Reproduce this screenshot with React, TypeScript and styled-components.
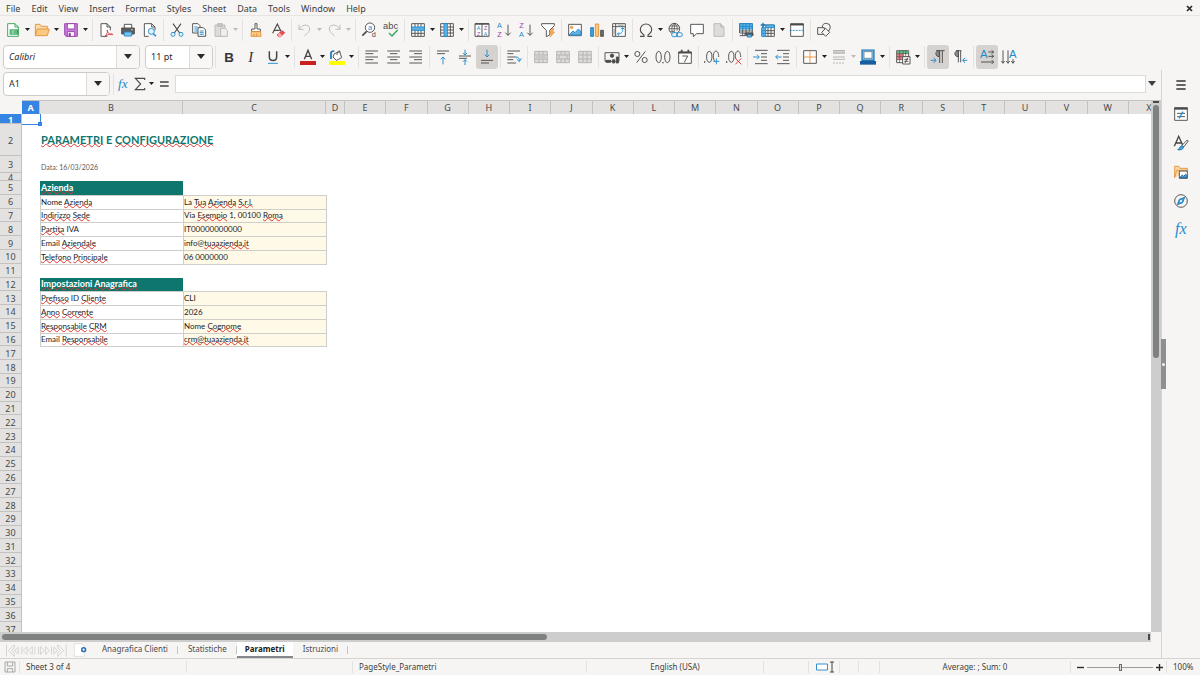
import React from 'react';
import styled, { createGlobalStyle, css } from 'styled-components';

const GlobalStyle = createGlobalStyle`
  * { box-sizing: border-box; }
  html, body, #root { height: 100%; }
  body {
    margin: 0;
    overflow: hidden;
    background: #f6f5f4;
    color: #3c3e40;
    font-family: "Noto Sans", sans-serif;
    font-size: 9px;
    line-height: 12px;
  }
  button, input {
    margin: 0;
    padding: 0;
    border: 0;
    background: none;
    color: inherit;
    font: inherit;
  }
  svg {
    flex: none;
    overflow: visible;
  }
`;

/* ---------- frame ---------- */

const Window = styled.div`
  display: flex;
  flex-direction: column;
  height: 100vh;
  min-height: 320px;
`;

const MenuBar = styled.nav`
  display: flex;
  align-items: center;
  gap: 11px;
  height: 16px;
  padding: 0 5px 0 6px;
  border-bottom: 1px solid #e6e5e3;
`;

const MenuItem = styled.button`
  padding-top: 2px;
  white-space: nowrap;
`;

const CloseButton = styled.button`
  display: flex;
  margin-left: auto;
  padding: 2px 2px 0;
`;

const Toolbar = styled.div`
  display: flex;
  align-items: center;
  height: 27px;
  padding-left: 2px;
`;

const Separator = styled.span<{ $wide?: boolean }>`
  flex: none;
  width: 1px;
  height: 22px;
  margin: 0 2px 0 ${p => (p.$wide ? 3 : 2)}px;
  background: #e3e2e0;
`;

const ToolButton = styled.button<{ $active?: boolean }>`
  display: flex;
  flex: none;
  align-items: center;
  justify-content: center;
  width: 22px;
  height: 24px;
  border-radius: 3px;
  background: ${p => (p.$active ? '#d5d2cf' : 'transparent')};
`;

const ArrowButton = styled.button<{ $dim?: boolean }>`
  display: flex;
  flex: none;
  align-items: center;
  justify-content: center;
  width: 7px;
  height: 24px;
  color: ${p => (p.$dim ? '#bdbcba' : '#202020')};
`;

const Combo = styled.div<{ $width: number }>`
  display: flex;
  flex: none;
  width: ${p => p.$width}px;
  height: 24px;
  border: 1px solid #cfccc8;
  border-radius: 4px;
  background: #fff;
  overflow: hidden;
`;

const ComboInput = styled.input<{ $italic?: boolean }>`
  flex: 1;
  min-width: 0;
  padding-left: 5px;
  color: #2c2c2c;
  font-style: ${p => (p.$italic ? 'italic' : 'normal')};
`;

const ComboButton = styled.button`
  display: flex;
  align-items: center;
  justify-content: center;
  width: 23px;
  border-left: 1px solid #dddbd8;
  background: #f8f7f6;
  color: #2b2b2b;
`;

const FormatBar = styled(Toolbar)`
  padding-left: 3px;
`;

const ComboGap = styled.span`
  width: 5px;
`;

/* ---------- body ---------- */

const Body = styled.div`
  display: flex;
  flex: 1;
  min-height: 0;
`;

const Main = styled.main`
  display: flex;
  flex: 1;
  flex-direction: column;
  min-width: 0;
`;

const FormulaBar = styled.div`
  display: flex;
  align-items: center;
  height: 27px;
  padding: 0 3px;
`;

const FormulaButton = styled.button<{ $width: number }>`
  display: flex;
  flex: none;
  align-items: center;
  justify-content: center;
  width: ${p => p.$width}px;
  height: 22px;
`;

const FormulaInput = styled.input`
  flex: 1;
  min-width: 0;
  height: 18px;
  margin-left: 2px;
  padding: 0 4px;
  border: 1px solid #dddbd8;
  background: #fff;
`;

const SheetArea = styled.div`
  display: flex;
  flex: 1;
  min-height: 0;
  margin-top: 3px;
`;

const SheetView = styled.div`
  flex: 1;
  min-width: 0;
  overflow: hidden;
  background: #fff;
`;

const Grid = styled.table`
  display: grid;
  grid-template-columns: 22px 18px 143px 143px 19px repeat(20, minmax(0, 1fr));
  grid-template-rows: 14px 10px 32px 17px 8px repeat(33, minmax(0, 1fr));
  width: calc(100% + 19px);
  height: calc(100% + 4px);
`;

const Section = styled.thead`
  display: contents;
`;

const Row = styled.tr`
  display: contents;
`;

const headerCell = css<{ $selected?: boolean }>`
  display: flex;
  align-items: center;
  justify-content: center;
  padding: 0;
  overflow: hidden;
  border: 0 solid #c3c2c0;
  background: ${p => (p.$selected ? '#3584e4' : '#e3e2e1')};
  color: ${p => (p.$selected ? '#fff' : '#47494b')};
  font-weight: ${p => (p.$selected ? 700 : 400)};
`;

const Corner = styled.td`
  padding: 0;
  background: #f6f5f4;
`;

const ColumnHead = styled.th<{ $selected?: boolean }>`
  ${headerCell}
  border-width: 1px 1px 0 0;
`;

const RowHead = styled.th<{ $selected?: boolean }>`
  ${headerCell}
  padding-top: 2px;
  border-width: 0 1px 1px 0;
`;

type Kind = 'empty' | 'title' | 'date' | 'band' | 'label' | 'value';

const Cell = styled.td<{ $kind: Kind; $last?: boolean }>`
  position: relative;
  display: flex;
  align-items: flex-end;
  padding: 0 0 1px;
  color: #1c1c1c;
  font-family: Lato, "Liberation Sans", sans-serif;
  font-size: 8px;
  line-height: 11px;
  white-space: pre;
  ${p => (p.$kind === 'label' || p.$kind === 'value') && css`
    border: 0 solid #cfcec8;
    border-width: 1px 0 0 1px;
  `}
  ${p => p.$kind === 'value' && css`
    margin-right: -1px;
    border-right-width: 1px;
    background: #fff9e8;
  `}
  ${p => p.$last && css`
    margin-bottom: -1px;
    border-bottom-width: 1px;
  `}
  ${p => p.$kind === 'band' && css`
    padding: 0 0 2px 1px;
    background: #0f766e;
    color: #fff;
    font-size: 9px;
    font-weight: 700;
  `}
  ${p => p.$kind === 'title' && css`
    align-items: center;
    padding: 0 0 2px 1px;
    color: #0f766e;
    font-size: 11px;
    font-weight: 700;
  `}
  ${p => p.$kind === 'date' && css`
    padding: 0 0 0 1px;
    color: #5c5c5c;
    font-size: 7px;
  `}
`;

const Misspelt = styled.span`
  text-decoration: underline wavy #e0352b 1px;
  text-decoration-skip-ink: none;
  text-underline-offset: -1px;
`;

const CellCursor = styled.span`
  position: absolute;
  inset: 0 -1px -1px 0;
  border: 0 solid #3584e4;
  border-width: 0 1px 1px 0;
  &::after {
    content: '';
    position: absolute;
    right: -2px;
    bottom: -2px;
    width: 4px;
    height: 4px;
    background: #3584e4;
  }
`;

const VScroll = styled.div`
  position: relative;
  width: 10px;
  padding: 4px 2px 0;
  border-top: 1px solid #c3c2c0;
  background: #cdcdcd;
`;

const VThumb = styled.div`
  height: 48%;
  border-radius: 3px;
  background: #7f8180;
`;

const HScroll = styled.div`
  display: flex;
  justify-content: space-between;
  height: 10px;
  margin-right: 10px;
  padding: 2px 1px 2px 2px;
  background: #cdcdcd;
`;

const HThumb = styled.div`
  width: 47.5%;
  border-radius: 3px;
  background: #7f8180;
`;

const SplitHandle = styled.span`
  width: 2px;
  background: #4a4a4a;
`;

const VSplitHandle = styled.span`
  position: absolute;
  top: 0;
  left: 2px;
  width: 6px;
  height: 2px;
  background: #4a4a4a;
`;

/* ---------- sheet tabs ---------- */

const TabBar = styled.div`
  display: flex;
  height: 16px;
  font-size: 8px;
`;

const TabNav = styled.div`
  display: flex;
  align-items: center;
  width: 73px;
  padding-left: 5px;
  color: #cfcecc;
`;

const TabNavButton = styled.button`
  display: flex;
  width: 16px;
`;

const AddSheet = styled.button`
  display: flex;
  align-items: center;
  width: 19px;
`;

const Tab = styled.button<{ $active?: boolean; $rule?: boolean }>`
  position: relative;
  padding: 0 ${p => (p.$active ? 8 : 10)}px;
  border-bottom: 2px solid ${p => (p.$active ? '#85888a' : 'transparent')};
  background: ${p => (p.$active ? '#fff' : 'transparent')};
  color: ${p => (p.$active ? '#222' : '#4a4c4e')};
  font-weight: ${p => (p.$active ? 700 : 400)};
  white-space: nowrap;
  ${p => p.$rule && css`
    &::after {
      content: '';
      position: absolute;
      top: 4px;
      right: 0;
      width: 1px;
      height: 8px;
      background: #c6c5c3;
    }
  `}
`;

/* ---------- sidebar ---------- */

const Sash = styled.div`
  display: flex;
  align-items: center;
  width: 4px;
  border-left: 1px solid #d6d4d1;
`;

const SashHandle = styled.button`
  position: relative;
  flex: none;
  width: 5px;
  height: 50px;
  margin-left: -1px;
  background: #8e8f8e;
  &::after {
    content: '';
    position: absolute;
    top: 24px;
    left: 1px;
    width: 3px;
    height: 3px;
    border-radius: 2px;
    background: #f6f5f4;
  }
`;

const SideBar = styled.aside`
  display: flex;
  flex-direction: column;
  width: 35px;
`;

const SideButton = styled.button`
  display: flex;
  align-items: center;
  justify-content: center;
  width: 32px;
  height: 29px;
`;

/* ---------- status bar ---------- */

const StatusBar = styled.footer`
  display: grid;
  grid-template-columns: 20px 167fr 166fr 234fr 177fr 45px 31px 19px 21px 191fr 96px 33px;
  align-items: center;
  height: 17px;
  border-top: 1px solid #d6d4d1;
  font-size: 8px;
`;

const Status = styled.div<{ $center?: boolean }>`
  display: flex;
  align-items: center;
  justify-content: ${p => (p.$center ? 'center' : 'flex-start')};
  height: 12px;
  padding: 0 ${p => (p.$center ? 0 : 6)}px;
  border-right: 1px solid #e3e2e0;
  white-space: nowrap;
  &:last-child { border-right: 0; }
`;

const ZoomStatus = styled(Status)`
  padding: 0 3px 0 6px;
`;

const ZoomButton = styled.button`
  display: flex;
  flex: none;
`;

const ZoomSlider = styled.input`
  flex: 1;
  min-width: 0;
  height: 12px;
  margin: 0 3px;
  appearance: none;
  &::-webkit-slider-runnable-track {
    height: 1px;
    background: #9a9c9b;
  }
  &::-webkit-slider-thumb {
    appearance: none;
    width: 3px;
    height: 7px;
    margin-top: -3px;
    border: 1px solid #6b6d6c;
    background: #dcdcdc;
  }
`;

/* ---------- icons (24 unit box) ---------- */

const INK = '#4b4b4b';
const BLUE = '#1e8bcd';
const PURPLE = '#9a3fae';
const DIM = '#b9b8b6';

const Glyph = styled.text`
  stroke: none;
  font-family: "Liberation Sans", sans-serif;
`;

const SerifGlyph = styled.text`
  stroke: none;
  font-family: "Liberation Serif", serif;
  font-style: italic;
`;

const Svg = ({ children, color = INK }: { children: React.ReactNode; color?: string }) => (
  <svg width="16" height="16" viewBox="0 0 24 24" fill="none" stroke={color} strokeWidth="1.4" aria-hidden="true">
    {children}
  </svg>
);

const Caret = ({ size = 5 }: { size?: number }) => (
  <svg width={size} height={size === 5 ? 3 : 5} viewBox="0 0 10 6" aria-hidden="true">
    <path d="M0 0h10L5 6z" fill="currentColor" />
  </svg>
);

const alignLines = (rows: number[][], color = INK) => (
  <path stroke={color} d={rows.map(([x, y, w]) => `M${x} ${y}h${w}`).join('')} />
);

const mergeIcon = (inner: string) => (
  <Svg color="#b3b2b0">
    <path fill="#dddcda" d="M2.500 3.500h19v17h-19z" />
    <path d={inner} />
  </Svg>
);

const icons: Record<string, React.ReactNode> = {
  New: (
    <Svg color="#2fa457">
      <path fill="#fff" d="M4 2.500h11l5 5v14H4z" />
      <path d="M15 2.500v5h5" />
      <path fill="#2fa457" stroke="none" d="M7 11h13v8H7z" />
      <path stroke="#d5f0dd" strokeWidth="1" d="M8 13.500h10M8 16.500h10M12 12v6" />
    </Svg>
  ),
  Open: (
    <Svg color="#e3933c">
      <path fill="#fbd9a6" d="M2 20V3.500h7l2 3h9v4" />
      <path fill="#fbc982" d="M2 20.500l3-10h18l-3 10z" />
    </Svg>
  ),
  Save: (
    <Svg color={PURPLE}>
      <path fill="#c57fd6" d="M2.500 2.500h19v19H4.500l-2-2z" />
      <path fill="#fff" d="M6.500 2.500h11v8h-11zM6.500 14.500h11v7h-11z" />
      <path fill={PURPLE} d="M9 17h2v4H9z" />
    </Svg>
  ),
  'Export as PDF': (
    <Svg>
      <path fill="#fff" d="M14 21.500H4.500v-19h9l5 5v5" />
      <path d="M13.500 2.500v5h5" />
      <path stroke="#d6404b" d="M10 22c4-4 5-8 4-10-2 0 2 8 8 7 1-2-5-2-12 3z" />
    </Svg>
  ),
  Print: (
    <Svg>
      <path fill="#fff" d="M6.500 9V3.500h11V9" />
      <path fill="#5b5e60" d="M2.500 9h19v9h-19z" />
      <path stroke="#fff" d="M17 11.500h2" />
      <path fill="#7fc0ea" stroke={BLUE} d="M6.500 15h11v6h-11z" />
    </Svg>
  ),
  'Print preview': (
    <Svg>
      <path fill="#fff" d="M10 21.500H3.500v-19h11l5 5v5" />
      <path d="M14.500 2.500v5h5" />
      <circle cx="14" cy="14" r="4.500" fill="#e2f1fb" stroke={BLUE} />
      <path stroke={BLUE} strokeWidth="2" d="M17 17.500l4 4" />
    </Svg>
  ),
  Cut: (
    <Svg>
      <path strokeWidth="1.700" d="M6 2.500l10 14M18 2.500L8 16.500" />
      <circle cx="6" cy="18.500" r="3" stroke={BLUE} />
      <circle cx="18" cy="18.500" r="3" stroke={BLUE} />
    </Svg>
  ),
  Copy: (
    <Svg>
      <path fill="#fff" d="M2.500 2.500h8l3 3v11h-11z" />
      <path stroke={BLUE} d="M5 7.500h5M5 10.500h5M5 13.500h5" />
      <path fill="#fff" d="M10.500 8.500h8l3.500 3.500v9.500H10.500z" />
      <path stroke={BLUE} d="M13 13.500h6M13 16h6M13 18.500h6" />
    </Svg>
  ),
  Paste: (
    <Svg color={DIM}>
      <path fill="#dddcda" d="M3 4.500h15v17H3z" />
      <path fill="#c9c8c6" d="M7 2.500h7v4H7z" />
      <path fill="#f0efee" d="M11.500 9.500h7l3 3v9h-10z" />
    </Svg>
  ),
  'Clone formatting': (
    <Svg>
      <path fill="#fff" d="M10.500 2.500h3v8h5v4h-13v-4h5z" />
      <path fill="#fbc982" stroke="#e3933c" d="M5 14.500h14l.500 7H4.500z" />
      <path stroke="#e3933c" d="M9 18v3M13 17v4" />
    </Svg>
  ),
  'Clear formatting': (
    <Svg>
      <path strokeWidth="1.800" d="M4 17L11 3l5.500 11M6.500 12.500h8" />
      <path fill="#ef4a50" stroke="#d6404b" d="M11 19l7-6 4 3-6 6h-3z" />
      <path fill="#f7b3b3" stroke="none" d="M12 18l2-2 4 4-2 2h-3z" />
    </Svg>
  ),
  Undo: (
    <Svg color={DIM}>
      <path d="M3 4v7h7M3 11c4-7 12-8 15-4 3 5-1 9-7 14" />
    </Svg>
  ),
  Redo: (
    <Svg color={DIM}>
      <path d="M21 4v7h-7M21 11C17 4 9 3 6 7c-3 5 1 9 7 14" />
    </Svg>
  ),
  'Find and replace': (
    <Svg>
      <circle cx="13.500" cy="8.500" r="7" fill="#fff" />
      <path strokeWidth="2.400" d="M8.500 14L2 20.500" />
      <Glyph x="10.500" y="12" fontSize="11" fill={BLUE}>a</Glyph>
      <Glyph x="16" y="23" fontSize="11" fill={INK}>d</Glyph>
    </Svg>
  ),
  Spelling: (
    <Svg>
      <Glyph x="0" y="11" fontSize="14" fill={INK}>abc</Glyph>
      <path stroke="#2fa457" strokeWidth="2" d="M9 16.500l4.500 4.500L22 12" />
    </Svg>
  ),
  Row: (
    <Svg>
      <path fill="#fff" d="M2.500 2.500h19v19h-19zM7.500 2.500v19M12 2.500v19M16.500 2.500v19M2.500 17h19" />
      <path fill="#62b2e4" stroke={BLUE} d="M2.500 7.500h19v5h-19z" />
    </Svg>
  ),
  Column: (
    <Svg>
      <path fill="#fff" d="M2.500 2.500h19v19h-19zM2.500 7.500h19M2.500 12h19M2.500 16.500h19M17 2.500v19" />
      <path fill="#62b2e4" stroke={BLUE} d="M7.500 2.500h5v19h-5z" />
    </Svg>
  ),
  Sort: (
    <Svg>
      <path fill="#fff" d="M1.500 2.500h21v19h-21zM12 2.500v19" />
      <path strokeWidth="2" d="M1.500 3h21" />
      <Glyph x="4" y="11.500" fontSize="8" fill={BLUE}>A</Glyph>
      <Glyph x="4.500" y="20.500" fontSize="8" fill={PURPLE}>Z</Glyph>
      <Glyph x="15" y="11.500" fontSize="8" fill={PURPLE}>Z</Glyph>
      <Glyph x="14.500" y="20.500" fontSize="8" fill={BLUE}>A</Glyph>
    </Svg>
  ),
  'Sort ascending': (
    <Svg>
      <Glyph x="1.500" y="9.500" fontSize="11" fill={BLUE}>A</Glyph>
      <Glyph x="2" y="22.500" fontSize="11" fill={PURPLE}>Z</Glyph>
      <path d="M18 4v16M14 16l4 4 4-4" />
    </Svg>
  ),
  'Sort descending': (
    <Svg>
      <Glyph x="2" y="9.500" fontSize="11" fill={PURPLE}>Z</Glyph>
      <Glyph x="1.500" y="22.500" fontSize="11" fill={BLUE}>A</Glyph>
      <path d="M18 4v16M14 16l4 4 4-4" />
    </Svg>
  ),
  AutoFilter: (
    <Svg>
      <path fill="#fff" d="M2.500 2.500h19v3l-7 7v7l-5 2.500v-9.500l-7-7z" />
      <path fill="#f4a64b" stroke="#e3933c" strokeWidth=".8" d="M18 10l-4 7h3l-2 6 7-8h-3l2-5z" />
    </Svg>
  ),
  'Insert image': (
    <Svg>
      <path fill="#fff" d="M2.500 3.500h19v17h-19z" />
      <circle cx="7" cy="8" r="1.800" fill="#f4a64b" stroke="#e3933c" />
      <path fill="#62b2e4" stroke={BLUE} d="M3 19.500l6-6 3 2.500 5-5.500 4 4v5z" />
    </Svg>
  ),
  'Insert chart': (
    <Svg>
      <path fill="#4aa3dc" stroke="#1b76b5" d="M2.500 8.500h4v13h-4z" />
      <path fill="#fbc982" stroke="#e3933c" d="M9.500 3h5v18.500h-5z" />
      <path fill="#6d6f70" d="M17.500 12.500h4v9h-4z" />
    </Svg>
  ),
  'Insert pivot table': (
    <Svg>
      <path fill="#fff" d="M2.500 2.500h19v19h-19zM7 2.500v19M2.500 7h19" />
      <path stroke={BLUE} d="M17 9c2 5-1 9-7 9M15 11l2-2.500 3 2M12 15.500L9.500 18l2.500 2" />
      <path strokeWidth=".9" d="M10 4.800h9M4.800 10v9" />
    </Svg>
  ),
  'Special character': (
    <Svg>
      <path strokeWidth="1.700" d="M3 21.500h6v-2C5 17 3.500 14 3.500 11a8.500 8 0 0117 0c0 3-1.500 6-5.500 8.500v2h6" />
    </Svg>
  ),
  Hyperlink: (
    <Svg>
      <circle cx="11" cy="10" r="8" />
      <path strokeWidth="1.100" d="M3 10h16M4.500 6h13M4.500 14h6M11 2v16M11 2C6 6 6 14 11 18M11 2c4 3 5 7 4 11" />
      <rect x="7" y="16" width="9" height="6" rx="3" stroke={BLUE} fill="#f6f5f4" />
      <rect x="14" y="16" width="9" height="6" rx="3" stroke={BLUE} />
    </Svg>
  ),
  Comment: (
    <Svg>
      <path fill="#fff" d="M2.500 3.500h19v14h-10l-5 4.500v-4.500h-4z" />
    </Svg>
  ),
  'Headers and footers': (
    <Svg color={DIM}>
      <path fill="#dddcda" d="M4.500 2.500h10l5 5v14h-15z" />
      <path fill="#cccbc9" d="M14.500 2.500v5h5" />
    </Svg>
  ),
  'Print area': (
    <Svg>
      <path fill="#fff" d="M2.500 2.500h19v14h-19zM2.500 20.500h8v-4M7 2.500v18M12 10v7M17 10v4M2.500 13.500h19" />
      <path fill="#62b2e4" stroke={BLUE} d="M2.500 2.500h19v8h-19zM7.500 2.500v8M12 2.500v8M17 2.500v8M2.500 6.500h19" />
      <path fill="#5b5e60" d="M11.500 16.500h11v4h-11z" />
      <path fill="#7fc0ea" stroke="#1b76b5" d="M14 19h6v3.500h-6z" />
    </Svg>
  ),
  Freeze: (
    <Svg>
      <path fill="#fff" d="M4.500 4.500h17v17h-17zM12 4.500v17M16.500 4.500v17M4.500 13h17M4.500 17h17" />
      <path fill="#62b2e4" stroke={BLUE} d="M2.500 8.500h6v13h-6zM8.500 4.500h13v4h-13zM2.500 13h6M2.500 17h6" />
      <path stroke="#1b76b5" strokeWidth="2" d="M4.500 1v7M1 4.500h7" />
    </Svg>
  ),
  'Split window': (
    <Svg>
      <path fill="#fff" d="M2.500 2.500h19v19h-19z" />
      <path strokeWidth="2.400" d="M2 4h20" />
      <path stroke={BLUE} strokeDasharray="3 1.500" d="M1 12.500h22" />
    </Svg>
  ),
  'Draw functions': (
    <Svg>
      <circle cx="15.500" cy="8" r="6" />
      <path fill="#f6f5f4" d="M2.500 8.500h10v10h-10z" />
      <path fill="#f6f5f4" d="M14.500 9.500l6 6-6 6-6-6z" />
    </Svg>
  ),
  Bold: (
    <Svg><Glyph x="5" y="19.500" fontSize="20" fontWeight="700" fill="#333">B</Glyph></Svg>
  ),
  Italic: (
    <Svg><SerifGlyph x="8" y="19" fontSize="22" fill="#333">I</SerifGlyph></Svg>
  ),
  Underline: (
    <Svg>
      <path strokeWidth="2.200" stroke="#444" d="M6.500 3.500V12c0 7 11 7 11 0V3.500" />
      <path stroke={BLUE} d="M4.500 21.500h15" />
    </Svg>
  ),
  'Font color': (
    <Svg>
      <path strokeWidth="2" stroke="#444" d="M6.500 15.500L12 2l5.500 13.500M8.500 11h7" />
      <path fill="#c9211e" stroke="none" d="M0 18h24v6H0z" />
    </Svg>
  ),
  Highlighting: (
    <Svg>
      <path fill="#fff" d="M8 7l8-3 3 9-8 4-5-5z" />
      <path d="M12 9c0-6 4-8 5-4" />
      <path stroke="#1b76b5" strokeWidth="2.600" d="M3 15V6c0-2 2-3 5-3" />
      <path fill="#ff0" stroke="none" d="M0 18h24v6H0z" />
    </Svg>
  ),
  'Align left': <Svg>{alignLines([[2, 3, 19], [2, 7, 12], [2, 12, 19], [2, 16, 12], [2, 21, 19]])}</Svg>,
  'Center horizontally': <Svg>{alignLines([[2, 3, 19], [6, 7, 11], [2, 12, 19], [6, 16, 11], [2, 21, 19]])}</Svg>,
  'Align right': <Svg>{alignLines([[2, 3, 19], [9, 7, 12], [2, 12, 19], [9, 16, 12], [2, 21, 19]])}</Svg>,
  'Align top': (
    <Svg>
      {alignLines([[3, 3, 18], [3, 7, 12]])}
      <path stroke={BLUE} d="M12 23V12M8.500 15.500L12 12l3.500 3.500" />
    </Svg>
  ),
  'Center vertically': (
    <Svg>
      {alignLines([[3, 10.5, 18], [3, 14, 12]])}
      <path stroke={BLUE} d="M12 1v8M9 6l3 3 3-3M12 24v-8M9 19l3-3 3 3" />
    </Svg>
  ),
  'Align bottom': (
    <Svg>
      {alignLines([[3, 17, 18], [3, 21, 12]])}
      <path stroke={BLUE} d="M12 1v11M8.500 8.500L12 12l3.500-3.500" />
    </Svg>
  ),
  'Wrap text': (
    <Svg>
      {alignLines([[2, 3, 19], [2, 7, 9], [2, 12, 13], [2, 16, 9], [2, 21, 13]])}
      <path stroke={BLUE} d="M15 12c4 0 5 2 5 6M16 15l4 4 3-5" />
    </Svg>
  ),
  'Merge and center': mergeIcon('M2.500 9h19M2.500 15h19M9 3.500V9M15 3.500V9M9 15v5.500M15 15v5.500M5 12h14'),
  'Merge cells': mergeIcon('M2.500 9h19M2.500 15h19M9 3.500V9M15 3.500V9M9 15v5.500M15 15v5.500M6 9v6M18 9v6'),
  'Split cells': mergeIcon('M2.500 9h19M2.500 15h19M9 3.500v17M15 3.500v17'),
  Currency: (
    <Svg>
      <path d="M1.500 5.500h21v13h-21z" />
      <circle cx="12" cy="10" r="2.500" fill={INK} />
      <path fill={INK} d="M13 16h3v5h-3zM18.500 12h3v9h-3zM3 20h7v-3H3z" />
    </Svg>
  ),
  Percent: (
    <Svg>
      <circle cx="6.500" cy="7.500" r="3.800" />
      <circle cx="17.500" cy="16.500" r="3.800" />
      <path d="M18.500 3.500l-13 17" />
    </Svg>
  ),
  Number: (
    <Svg>
      <ellipse cx="5.500" cy="12" rx="4" ry="8.500" />
      <ellipse cx="18.500" cy="12" rx="4" ry="8.500" />
      <path strokeWidth="2" d="M11 20.500h2" />
    </Svg>
  ),
  Date: (
    <Svg>
      <path fill="#fff" d="M2.500 4.500h19v17h-19z" />
      <path strokeWidth="2.600" d="M2 5.500h20M7 1v4M17 1v4" />
      <path d="M8 10.500h8L11 20" />
    </Svg>
  ),
  'Add decimal place': (
    <Svg>
      <path strokeWidth="2" d="M0 19.500h2" />
      <path d="M8 20C2.500 20 2.500 3.500 8 3.500s5 16.500 0 16.500zM22 12c0-12-7.500-11-8-2.500 0 5 1 8 2.500 9.500" />
      <path stroke={BLUE} d="M18.500 14v9M14 18.500h9" />
    </Svg>
  ),
  'Delete decimal place': (
    <Svg>
      <path strokeWidth="2" d="M0 19.500h2" />
      <path d="M8 20C2.500 20 2.500 3.500 8 3.500s5 16.500 0 16.500zM22 12c0-12-7.500-11-8-2.500 0 3 .500 4 1 5.500" />
      <path stroke="#e0352b" d="M14 14l9 9M23 14l-9 9" />
    </Svg>
  ),
  'Increase indent': (
    <Svg>
      {alignLines([[3, 2, 19], [12, 7, 9], [12, 12, 9], [12, 17, 9], [3, 22, 19]])}
      <path stroke={BLUE} d="M0 12h9M6 8.500L9.500 12 6 15.500" />
    </Svg>
  ),
  'Decrease indent': (
    <Svg>
      {alignLines([[3, 2, 19], [12, 7, 9], [12, 12, 9], [12, 17, 9], [3, 22, 19]])}
      <path stroke={BLUE} d="M10 12H1M4.500 8.500L1 12l3.500 3.500" />
    </Svg>
  ),
  Borders: (
    <Svg>
      <path fill="#fff" d="M2.500 2.500h19v19h-19z" />
      <path stroke="#e3933c" d="M12 3v18M3 12h18" />
    </Svg>
  ),
  'Border style': (
    <Svg color="#b3b2b0">
      <path d="M3 2.500h18M3 6h18" strokeWidth="2.200" />
      <path d="M3 12h18M3 15.500h18" />
      <path strokeDasharray="3 1.500" d="M3 21h18" />
    </Svg>
  ),
  'Border color': (
    <Svg>
      <path fill="#7fc0ea" stroke="#1b76b5" strokeWidth="1.800" d="M3 1.500h18V17H3z" />
      <path fill="#fff" stroke="#7a8a99" d="M6 4h12v10H6z" />
      <path fill="#1b5c9e" stroke="none" d="M0 18h24v5.500H0z" />
    </Svg>
  ),
  'Conditional formatting': (
    <Svg>
      <path fill="#fff" d="M2.500 2.500h18v18h-18z" />
      <path fill="#5cbf7d" stroke="none" d="M3 3h17v4H3z" />
      <path fill="#f07a7a" stroke="none" d="M3 7h10v9H3z" />
      <path strokeWidth="1" d="M2.500 7h18M2.500 11.500h18M2.500 16h10M7 2.500v18M12 2.500v9M16 2.500v9" />
      <path fill="#fff" d="M11.500 11.500h11v11h-11z" />
      <path d="M14 15.500h6M14 18.500h6M19 13l-4 8" />
    </Svg>
  ),
  'Left to right': (
    <Svg>
      <path d="M9 2.500h13M14.500 2.500V21M18.500 2.500V21" />
      <path fill="#8a8b8b" d="M14 2.500c-7 0-7 9 0 9z" />
      <path stroke={BLUE} d="M1 17h8M5.500 13L9 17l-3.500 4" />
    </Svg>
  ),
  'Right to left': (
    <Svg>
      <path d="M6 2.500h8M9.500 2.500V20M13 2.500V20" />
      <path fill="#8a8b8b" d="M9.500 2.500c-7 0-7 9 0 9z" />
      <path stroke={BLUE} d="M23 17h-7M19.500 13L16 17l3.500 4" />
    </Svg>
  ),
  'Text from left to right': (
    <Svg>
      <Glyph x="1.500" y="14" fontSize="17" fill={BLUE}>A</Glyph>
      <path d="M14 4.500h8M14 11h8M3 19.500h19M19 2l3 2.500L19 7M19 8.500l3 2.500-3 2.500M19 16.500l3 3-3 3" />
    </Svg>
  ),
  'Text from top to bottom': (
    <Svg>
      <Glyph x="12" y="14" fontSize="17" fill={BLUE}>A</Glyph>
      <path d="M3 2v19M10.500 2v19M18 15v6M.500 18L3 21.500 5.500 18M8 18l2.500 3.500L13 18M15.500 18l2.500 3.500 2.500-3.500" />
    </Svg>
  ),
};

/* ---------- toolbars ---------- */

type Tool = [name: string, arrow?: boolean, state?: 'dim' | 'active'];

const standardTools: Tool[][] = [
  [['New', true], ['Open', true], ['Save', true]],
  [['Export as PDF'], ['Print'], ['Print preview']],
  [['Cut'], ['Copy'], ['Paste', true, 'dim']],
  [['Clone formatting'], ['Clear formatting']],
  [['Undo', true, 'dim'], ['Redo', true, 'dim']],
  [['Find and replace'], ['Spelling']],
  [['Row', true], ['Column', true]],
  [['Sort'], ['Sort ascending'], ['Sort descending'], ['AutoFilter']],
  [['Insert image'], ['Insert chart'], ['Insert pivot table']],
  [['Special character', true], ['Hyperlink'], ['Comment'], ['Headers and footers', false, 'dim']],
  [['Print area'], ['Freeze', true], ['Split window']],
  [['Draw functions']],
];

const formatTools: Tool[][] = [
  [['Bold'], ['Italic'], ['Underline', true]],
  [['Font color', true], ['Highlighting', true]],
  [['Align left'], ['Center horizontally'], ['Align right']],
  [['Align top'], ['Center vertically'], ['Align bottom', false, 'active']],
  [['Wrap text']],
  [['Merge and center'], ['Merge cells'], ['Split cells']],
  [['Currency', true], ['Percent'], ['Number'], ['Date']],
  [['Add decimal place'], ['Delete decimal place']],
  [['Increase indent'], ['Decrease indent']],
  [['Borders', true], ['Border style', true, 'dim'], ['Border color', true]],
  [['Conditional formatting', true]],
  [['Left to right', false, 'active'], ['Right to left']],
  [['Text from left to right', false, 'active'], ['Text from top to bottom']],
];

const ToolGroups = ({ groups }: { groups: Tool[][] }) => (
  <>
    {groups.map((group, g) => (
      <React.Fragment key={g}>
        {g > 0 && <Separator $wide={groups[g - 1][groups[g - 1].length - 1][1]} />}
        {group.map(([name, arrow, state]) => (
          <React.Fragment key={name}>
            <ToolButton aria-label={name} $active={state === 'active'}>{icons[name]}</ToolButton>
            {arrow && (
              <ArrowButton aria-label={`${name} options`} $dim={state === 'dim'}><Caret /></ArrowButton>
            )}
          </React.Fragment>
        ))}
      </React.Fragment>
    ))}
  </>
);

const ComboBox = ({ label, value, width, italic }: { label: string; value: string; width: number; italic?: boolean }) => (
  <Combo $width={width}>
    <ComboInput aria-label={label} defaultValue={value} $italic={italic} />
    <ComboButton aria-label={`${label} list`}><Caret size={8} /></ComboButton>
  </Combo>
);

/* ---------- sheet data ---------- */

/* Words between asterisks are the ones the spell checker flags. */
const cells: Record<string, { kind: Kind; text: string; last?: boolean }> = {
  B2: { kind: 'title', text: '*PARAMETRI* E *CONFIGURAZIONE*' },
  B3: { kind: 'date', text: 'Data: 16/03/2026' },
  B5: { kind: 'band', text: '*Azienda*' },
  B6: { kind: 'label', text: 'Nome *Azienda*' },
  C6: { kind: 'value', text: 'La *Tua* *Azienda* *S.r.l.*' },
  B7: { kind: 'label', text: '*Indirizzo* *Sede*' },
  C7: { kind: 'value', text: 'Via *Esempio* 1, 00100 *Roma*' },
  B8: { kind: 'label', text: '*Partita* IVA' },
  C8: { kind: 'value', text: 'IT00000000000' },
  B9: { kind: 'label', text: 'Email *Aziendale*' },
  C9: { kind: 'value', text: 'info@*tuaazienda.it*' },
  B10: { kind: 'label', text: '*Telefono* *Principale*', last: true },
  C10: { kind: 'value', text: '06 0000000', last: true },
  B12: { kind: 'band', text: '*Impostazioni* *Anagrafica*' },
  B13: { kind: 'label', text: '*Prefisso* ID *Cliente*' },
  C13: { kind: 'value', text: 'CLI' },
  B14: { kind: 'label', text: '*Anno* *Corrente*' },
  C14: { kind: 'value', text: '2026' },
  B15: { kind: 'label', text: '*Responsabile* *CRM*' },
  C15: { kind: 'value', text: 'Nome *Cognome*' },
  B16: { kind: 'label', text: 'Email *Responsabile*', last: true },
  C16: { kind: 'value', text: '*crm@tuaazienda.it*', last: true },
};

const columns = 'ABCDEFGHIJKLMNOPQRSTUVWX'.split('');
const rows = Array.from({ length: 37 }, (_, i) => i + 1);

const CellText = ({ text }: { text: string }) => (
  <span>
    {text.split('*').map((part, i) => (i % 2 ? <Misspelt key={i}>{part}</Misspelt> : part))}
  </span>
);

const Sheet = () => (
  <Grid>
    <Section>
      <Row>
        <Corner />
        {columns.map(c => <ColumnHead key={c} scope="col" $selected={c === 'A'}>{c}</ColumnHead>)}
      </Row>
    </Section>
    <Section as="tbody">
      {rows.map(r => (
        <Row key={r}>
          <RowHead scope="row" $selected={r === 1}>{r}</RowHead>
          {columns.map(c => {
            const cell = cells[c + r];
            return (
              <Cell key={c} $kind={cell ? cell.kind : 'empty'} $last={cell?.last}>
                {cell && <CellText text={cell.text} />}
                {c === 'A' && r === 1 && <CellCursor />}
              </Cell>
            );
          })}
        </Row>
      ))}
    </Section>
  </Grid>
);

const menus = ['File', 'Edit', 'View', 'Insert', 'Format', 'Styles', 'Sheet', 'Data', 'Tools', 'Window', 'Help'];

const sideIcons: [string, React.ReactNode][] = [
  ['Sidebar settings', <Svg><path strokeWidth="2.200" stroke="#333" d="M5 6h14M5 12h14M5 18h14" /></Svg>],
  ['Properties', (
    <Svg>
      <path fill="#fff" d="M2.500 2.500h19v19h-19z" />
      <path strokeWidth="3" d="M2 4h20" />
      <path d="M6 11h12M6 16h12" />
      <path stroke={BLUE} strokeWidth="2" d="M15 8.500l-3 5M12 13.500l-3 5" />
    </Svg>
  )],
  ['Styles', (
    <Svg>
      <path strokeWidth="2" stroke="#444" d="M2 17L8.500 2 15 16M4.500 12h8" />
      <path fill="#fff" d="M13 16l8-8 2 1-7 9z" />
      <path fill="#4aa3dc" stroke="#1b76b5" d="M7 22c3 0 3-5 6-6l3 2c-1 4-5 5-9 4z" />
    </Svg>
  )],
  ['Gallery', (
    <Svg>
      <path fill="#fbd9a6" stroke="#e3933c" d="M2.500 20.500v-17h6l2 3h11v5M2.500 20.500l3-11h17" />
      <path fill="#fff" d="M9.500 10.500h12v11h-12z" />
      <path fill="#4aa3dc" stroke="#1b5c9e" d="M10 20.500l4-4 2 2 3-3 2 2v3z" />
    </Svg>
  )],
  ['Navigator', (
    <Svg>
      <circle cx="12" cy="12" r="9.500" />
      <path fill="#4aa3dc" stroke="#1b76b5" d="M17.500 6.500l-3 8-8 3 3-8z" />
      <circle cx="12" cy="12" r="1.500" fill="#fff" stroke="none" />
    </Svg>
  )],
  ['Functions', <Svg><SerifGlyph x="3" y="18" fontSize="24" fill={BLUE}>fx</SerifGlyph></Svg>],
];

const tabNav: [string, string][] = [
  ['First sheet', 'M2 1v18M14 1L5 10l9 9v-5l-4-4 4-4zM20 5l-6 5 6 5z'],
  ['Previous sheet', 'M1 4v12M9 4l-6 6 6 6zM17 4l-6 6 6 6zM21 4v12'],
  ['Next sheet', 'M2 4v12M5 4l6 6-6 6zM13 4l6 6-6 6zM22 4v12'],
  ['Last sheet', 'M1 5l6 5-6 5zM7 1l9 9-9 9v-5l4-4-4-4zM20 1v18'],
];

export default function App() {
  return (
    <Window>
      <GlobalStyle />
      <MenuBar>
        {menus.map(m => <MenuItem key={m}>{m}</MenuItem>)}
        <CloseButton aria-label="Close document">
          <svg width="7" height="7" viewBox="0 0 14 14" aria-hidden="true">
            <path d="M2 2l10 10M12 2L2 12" stroke="#2b2b2b" strokeWidth="3.500" />
          </svg>
        </CloseButton>
      </MenuBar>

      <Toolbar>
        <ToolGroups groups={standardTools} />
      </Toolbar>

      <FormatBar>
        <ComboBox label="Font name" value="Calibri" width={137} italic />
        <ComboGap />
        <ComboBox label="Font size" value="11 pt" width={68} />
        <Separator />
        <ToolGroups groups={formatTools} />
      </FormatBar>

      <Body>
        <Main>
          <FormulaBar>
            <ComboBox label="Name box" value="A1" width={107} />
            <Separator $wide />
            <FormulaButton aria-label="Function wizard" $width={16}>
              <Svg><SerifGlyph x="3" y="18" fontSize="20" fill={BLUE}>fx</SerifGlyph></Svg>
            </FormulaButton>
            <FormulaButton aria-label="Select function" $width={16}>
              <Svg><path strokeWidth="1.700" d="M19 6V3.500H5l8 8.500-8 8.500h14V18" /></Svg>
            </FormulaButton>
            <ArrowButton aria-label="Select function options"><Caret /></ArrowButton>
            <FormulaButton aria-label="Formula" $width={18}>
              <Svg><path stroke="#444" strokeWidth="2.600" d="M6 9h13M6 15h13" /></Svg>
            </FormulaButton>
            <FormulaInput aria-label="Input line" />
            <FormulaButton aria-label="Expand formula bar" $width={12}><Caret size={8} /></FormulaButton>
          </FormulaBar>
          <SheetArea>
            <SheetView><Sheet /></SheetView>
            <VScroll><VSplitHandle /><VThumb /></VScroll>
          </SheetArea>
          <HScroll><HThumb /><SplitHandle /></HScroll>
          <TabBar>
            <TabNav>
              {tabNav.map(([name, d]) => (
                <TabNavButton key={name} aria-label={name}>
                  <svg width="16" height="13" viewBox="0 0 24 20" fill="none" stroke="currentColor" strokeWidth="1.300" aria-hidden="true">
                    <path d={d} />
                  </svg>
                </TabNavButton>
              ))}
            </TabNav>
            <AddSheet aria-label="Add sheet">
              <svg width="16" height="14" viewBox="0 0 24 21" fill="none" aria-hidden="true">
                <path d="M2 1h11l4 4v15H2z" fill="#fff" stroke="#d6d5d3" />
                <circle cx="16" cy="10" r="4" fill="#2a6fb5" />
                <path d="M16 8v4M14 10h4" stroke="#fff" strokeWidth="1.300" />
              </svg>
            </AddSheet>
            <Tab $rule>Anagrafica Clienti</Tab>
            <Tab $rule>Statistiche</Tab>
            <Tab $active>Parametri</Tab>
            <Tab $rule>Istruzioni</Tab>
          </TabBar>
        </Main>
        <Sash><SashHandle aria-label="Hide sidebar" /></Sash>
        <SideBar>
          {sideIcons.map(([name, icon]) => <SideButton key={name} aria-label={name}>{icon}</SideButton>)}
        </SideBar>
      </Body>

      <StatusBar>
        <Status $center>
          <Svg color="#a3a3a2">
            <path d="M4.500 4.500h15v15h-15zM8 4.500v6h8v-6M8 19.500v-5h8v5" />
          </Svg>
        </Status>
        <Status>Sheet 3 of 4</Status>
        <Status />
        <Status>PageStyle_Parametri</Status>
        <Status $center>English (USA)</Status>
        <Status />
        <Status>
          <svg width="20" height="12" viewBox="0 0 20 12" fill="none" aria-hidden="true">
            <path d="M1.500 3h11v6h-11z" fill="#fff" stroke="#3b8fc9" />
            <path d="M15 1h4M17 1v10M15 11h4" stroke="#444" />
          </svg>
        </Status>
        <Status />
        <Status />
        <Status $center>Average: ; Sum: 0</Status>
        <ZoomStatus>
          <ZoomButton aria-label="Zoom out">
            <svg width="7" height="7" viewBox="0 0 7 7" aria-hidden="true"><path d="M0 3.500h7" stroke="#2b2b2b" strokeWidth="1.400" /></svg>
          </ZoomButton>
          <ZoomSlider type="range" aria-label="Zoom" defaultValue={50} />
          <ZoomButton aria-label="Zoom in">
            <svg width="7" height="7" viewBox="0 0 7 7" aria-hidden="true"><path d="M0 3.500h7M3.500 0v7" stroke="#2b2b2b" strokeWidth="1.400" /></svg>
          </ZoomButton>
        </ZoomStatus>
        <Status>100%</Status>
      </StatusBar>
    </Window>
  );
}
